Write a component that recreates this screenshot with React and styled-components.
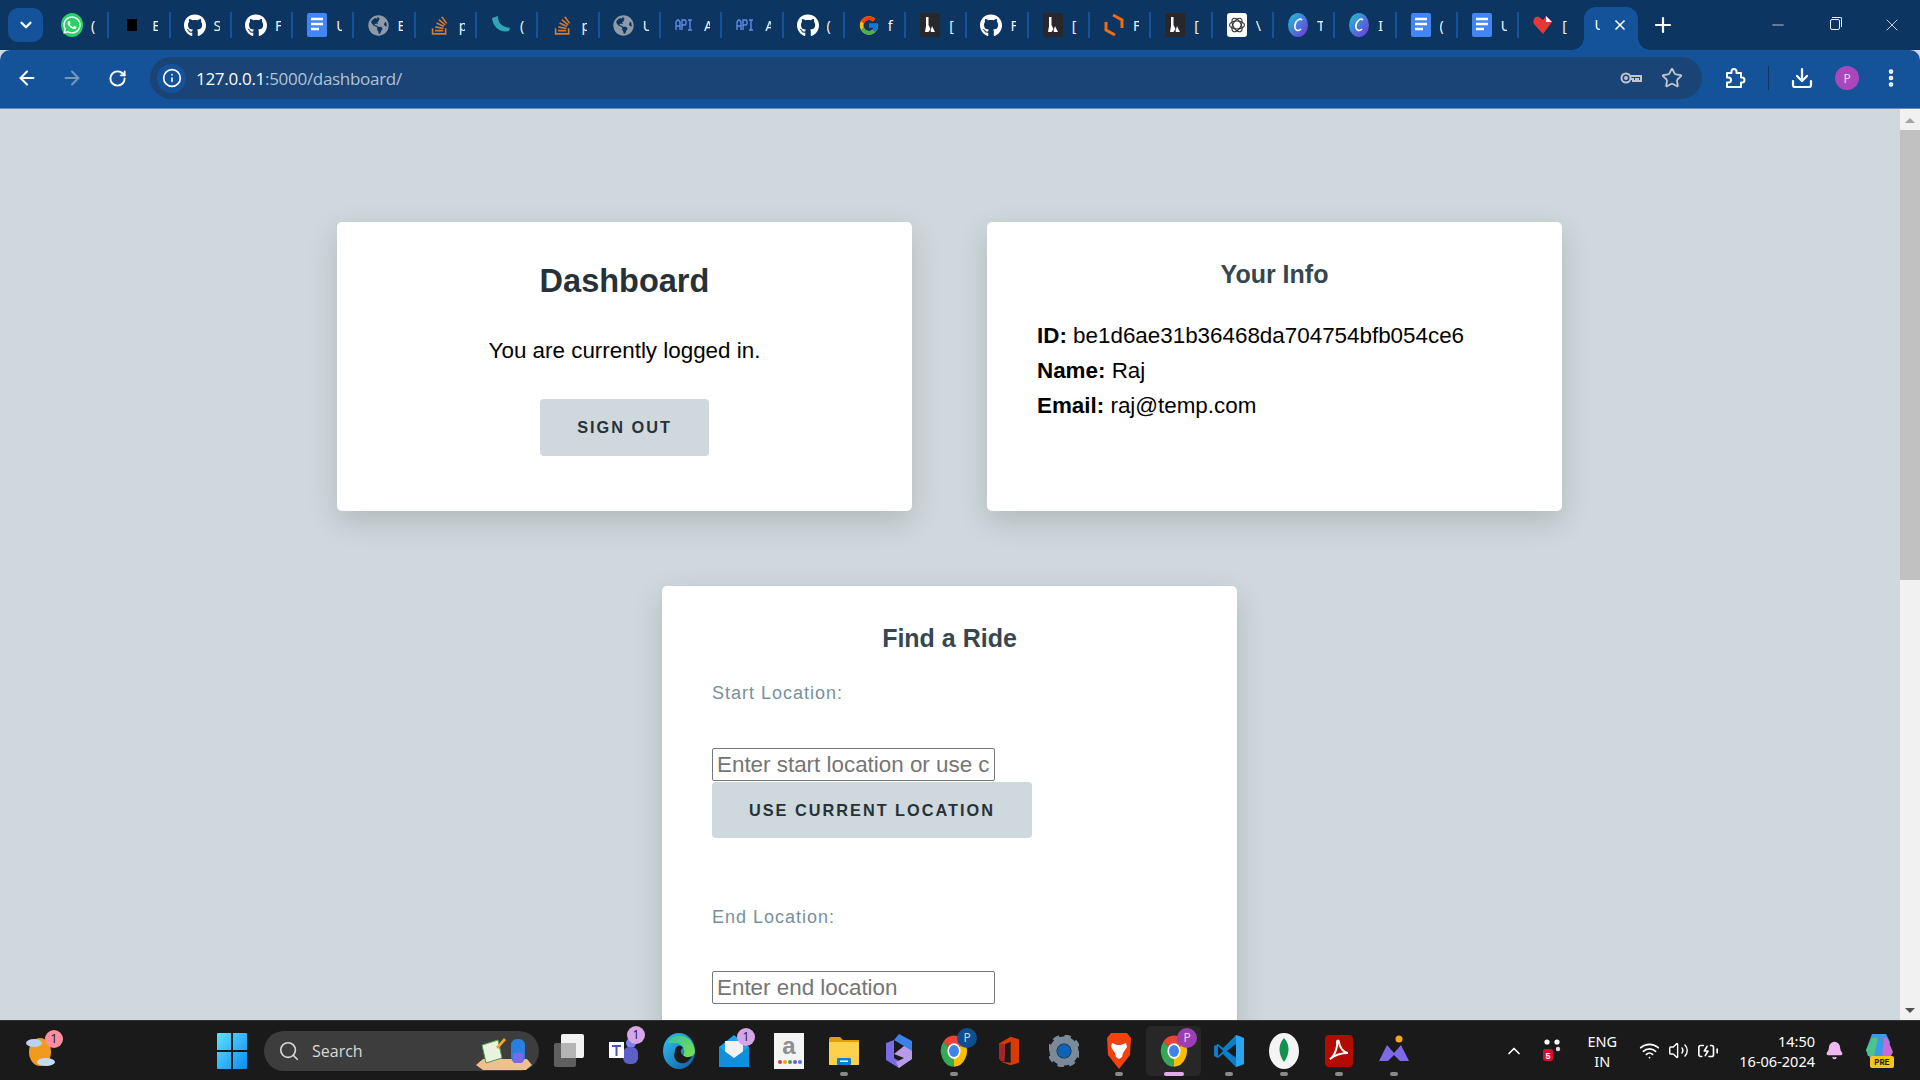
import React from "react";
import styled, { createGlobalStyle } from "styled-components";
import {
  ArrowLeft, ArrowRight, RotateCw, Info, X, Plus, Minus, Star, Download,
  EllipsisVertical, ChevronDown, ChevronUp, Search, Wifi, Volume2, BatteryCharging, Bell,
} from "lucide-react";
import { FaWhatsapp, FaGithub, FaStackOverflow, FaGlobeAmericas } from "react-icons/fa";
import { FcGoogle } from "react-icons/fc";

const GlobalStyle = createGlobalStyle`
  html, body {
    margin: 0;
    padding: 0;
    overflow: hidden;
    background: #cfd8dc;
  }
  * { box-sizing: border-box; }
`;

const Screen = styled.div`
  width: 1920px;
  height: 1080px;
  display: flex;
  flex-direction: column;
  overflow: hidden;
  font-family: "Liberation Sans", Arial, sans-serif;
`;

/* browser chrome */
const TabStrip = styled.div`
  height: 50px;
  flex: none;
  display: flex;
  align-items: flex-start;
  background: #0d3561;
  padding-left: 8px;
`;

const TabMenu = styled.button`
  width: 35px;
  height: 34px;
  margin: 8px 5px 0 0;
  flex: none;
  border: 0;
  border-radius: 10px;
  background: #14539a;
  color: #fff;
  display: flex;
  align-items: center;
  justify-content: center;
  padding: 0;
`;

const Tab = styled.div`
  width: 61.3px;
  height: 26px;
  margin-top: 12px;
  flex: none;
  display: flex;
  align-items: center;
  gap: 8px;
  padding: 0 0 0 13px;
  border-right: ${(p) => (p.$last ? "0" : "2px solid #14539a")};
  color: #f2f5f9;
  font: 14px "Noto Sans", sans-serif;
  overflow: hidden;
`;

const TabIcon = styled.div`
  width: 22px;
  height: 26px;
  flex: none;
  display: flex;
  align-items: center;
  justify-content: center;
`;

const WhatsappMark = styled.div`
  width: 22px;
  height: 24px;
  border-radius: 50%;
  background: #25d366;
  display: flex;
  align-items: center;
  justify-content: center;
  color: #fff;
`;

const TabTitle = styled.span`
  width: 6px;
  flex: none;
  overflow: hidden;
  white-space: nowrap;
`;

const ActiveTab = styled.div`
  width: 54px;
  height: 43px;
  margin: 7px 0 0 4px;
  flex: none;
  display: flex;
  align-items: center;
  justify-content: space-between;
  padding: 0 10px 8px 10px;
  background: #14539a;
  border-radius: 12px 12px 0 0;
  color: #fff;
  font: 14px "Noto Sans", sans-serif;
  position: relative;
  &::before, &::after {
    content: "";
    position: absolute;
    bottom: 0;
    width: 12px;
    height: 12px;
    background: radial-gradient(circle at 0 0, #0d3561 11.5px, #14539a 12px);
  }
  &::before { left: -12px; }
  &::after { right: -12px; background: radial-gradient(circle at 100% 0, #0d3561 11.5px, #14539a 12px); }
`;

const NewTab = styled.div`
  width: 24px;
  height: 24px;
  margin: 13px 0 0 13px;
  flex: none;
  color: #fff;
`;

const WindowControls = styled.div`
  margin-left: auto;
  display: flex;
  height: 50px;
  color: #e8eef5;
`;

const WindowButton = styled.div`
  width: 57px;
  display: flex;
  align-items: center;
  justify-content: center;
  padding-bottom: 1px;
`;

const RestoreIcon = styled.div`
  width: 10px;
  height: 11px;
  border: 1px solid #e8eef5;
  border-radius: 2px;
  position: relative;
  &::after {
    content: "";
    position: absolute;
    top: -3px;
    right: -3px;
    width: 9px;
    height: 9px;
    border-top: 1px solid #e8eef5;
    border-right: 1px solid #e8eef5;
    border-radius: 0 2px 0 0;
  }
`;

const Toolbar = styled.div`
  height: 59px;
  flex: none;
  display: flex;
  align-items: center;
  padding: 0 0 2px 9px;
  background: #14539a;
  border-bottom: 1px solid #5f8fc0;
  border-radius: 10px 10px 0 0;
`;

const NavButton = styled.div`
  width: 36px;
  height: 36px;
  margin-right: 9px;
  flex: none;
  display: flex;
  align-items: center;
  justify-content: center;
  color: ${(p) => (p.$dim ? "#7596bd" : "#fff")};
`;

const Omnibox = styled.div`
  width: 1552px;
  height: 42px;
  margin-left: 6px;
  flex: none;
  display: flex;
  align-items: center;
  padding: 0 19px 0 7px;
  border-radius: 21px;
  background: #194475;
`;

const SiteInfo = styled.div`
  width: 29px;
  height: 29px;
  flex: none;
  border-radius: 50%;
  background: #14539a;
  color: #fff;
  display: flex;
  align-items: center;
  justify-content: center;
`;

const Url = styled.div`
  margin-left: 10px;
  font: 17px "Open Sans", sans-serif;
  letter-spacing: -0.3px;
  color: #fff;
  span { color: #b2c2d6; }
`;

const OmniIcons = styled.div`
  margin-left: auto;
  display: flex;
  align-items: center;
  gap: 18px;
  color: #c2c6cc;
`;

const ToolIcons = styled.div`
  display: flex;
  align-items: center;
  margin-left: 21px;
  color: #fff;
`;

const ToolIcon = styled.div`
  width: ${(p) => p.$w || 24}px;
  height: 24px;
  margin-right: ${(p) => p.$gap || 0}px;
  display: flex;
  align-items: center;
  justify-content: center;
`;

const ToolDivider = styled.div`
  width: 1px;
  height: 24px;
  margin-right: 21px;
  background: #0d3561;
`;

const Avatar = styled.div`
  width: 24px;
  height: 24px;
  margin-right: 20px;
  border-radius: 50%;
  background: #ab47bc;
  color: #f3dff7;
  font: 12px "Open Sans", sans-serif;
  display: flex;
  align-items: center;
  justify-content: center;
`;

/* page content */
const Viewport = styled.div`
  flex: 1;
  min-height: 0;
  display: flex;
  background: #cfd8dc;
  overflow: hidden;
`;

const Page = styled.main`
  flex: 1;
  min-width: 0;
  padding: 113px 1px 0 0;
  display: flex;
  flex-direction: column;
  align-items: center;
  gap: 75px;
`;

const Row = styled.div`
  display: flex;
  gap: 75px;
`;

const Card = styled.section`
  width: 575px;
  height: ${(p) => p.$h || 289}px;
  flex: none;
  padding: 40px 50px;
  background: #fff;
  border-radius: 5px;
  box-shadow: 0 10px 30px rgba(0, 0, 0, 0.15);
`;

const CenterCard = styled(Card)`
  display: flex;
  flex-direction: column;
  align-items: center;
`;

const Title = styled.h1`
  margin: 1px 0 0;
  font-size: 32.5px;
  line-height: 37px;
  font-weight: 700;
  color: #263238;
`;

const Lead = styled.p`
  margin: 37px 0 0;
  font-size: 22.4px;
  line-height: 28px;
  color: #000;
`;

const SubTitle = styled.h2`
  margin: ${(p) => p.$top || 0}px 0 0;
  font-size: 25px;
  line-height: 29px;
  font-weight: 700;
  text-align: center;
  color: #37474f;
`;

const InfoList = styled.div`
  margin-top: 29px;
  font-size: 22.4px;
  line-height: 35.2px;
  color: #000;
  b { font-weight: 700; }
`;

const Action = styled.button`
  display: block;
  height: ${(p) => p.$h || 57}px;
  margin-top: ${(p) => p.$top || 0}px;
  padding: 0 37px;
  border: 0;
  border-radius: 4px;
  background: #cfd8dc;
  color: #263238;
  font: 700 16.3px "Liberation Sans", Arial, sans-serif;
  letter-spacing: 2px;
  white-space: nowrap;
`;

const Label = styled.label`
  display: block;
  margin-top: ${(p) => p.$top}px;
  font-size: 18px;
  line-height: 21px;
  letter-spacing: 1px;
  color: #78909c;
`;

const Field = styled.input`
  display: block;
  width: 283px;
  height: 33px;
  margin: ${(p) => p.$top || 44}px 0 0;
  padding: 0 4px;
  border: 1px solid #767676;
  border-radius: 2px;
  background: #fff;
  font: 22.4px "Liberation Sans", Arial, sans-serif;
  color: #000;
  outline: none;
  &::placeholder { color: #757575; opacity: 1; }
`;

const Scrollbar = styled.div`
  width: 20px;
  flex: none;
  display: flex;
  flex-direction: column;
  align-items: center;
  background: #f1f1f1;
`;

const ScrollArrow = styled.div`
  width: 0;
  height: 0;
  flex: none;
  margin: 9px 0 ${(p) => (p.$down ? 7 : 0)}px;
  border-left: 5px solid transparent;
  border-right: 5px solid transparent;
  border-bottom: ${(p) => (p.$down ? "0" : "5px solid #a3a3a3")};
  border-top: ${(p) => (p.$down ? "5px solid #505050" : "0")};
`;

const ScrollThumb = styled.div`
  width: 100%;
  height: 450px;
  margin-top: 7px;
  background: #c1c1c1;
`;

const ScrollSpacer = styled.div`
  flex: 1;
`;

/* taskbar */
const Taskbar = styled.footer`
  height: 60px;
  flex: none;
  display: flex;
  align-items: center;
  background: #1a1a1a;
  border-top: 1px solid #333;
  color: #fff;
  position: relative;
`;

const Weather = styled.div`
  width: 32px;
  height: 36px;
  margin-left: 25px;
  flex: none;
  position: relative;
`;

const Dock = styled.div`
  display: flex;
  align-items: center;
  margin-left: ${(p) => p.$left || 0}px;
`;

const DockItem = styled.div`
  width: 55px;
  height: 50px;
  flex: none;
  display: flex;
  align-items: center;
  justify-content: center;
  position: relative;
  border-radius: 5px;
  background: ${(p) => (p.$active ? "#272727" : "transparent")};
  &::after {
    content: "";
    display: ${(p) => (p.$run || p.$active ? "block" : "none")};
    position: absolute;
    bottom: 0;
    left: 50%;
    width: ${(p) => (p.$active ? 20 : 8)}px;
    height: 4px;
    transform: translateX(-50%);
    border-radius: 2px;
    background: ${(p) => (p.$active ? "#e3abe9" : "#8a8a8a")};
  }
`;

const SearchBox = styled.div`
  width: 275px;
  height: 40px;
  margin-left: 5px;
  flex: none;
  display: flex;
  align-items: center;
  gap: 12px;
  padding-left: 14px;
  border-radius: 20px;
  background: #3d3d3d;
  color: #d8d8d8;
  font: 16px "Open Sans", sans-serif;
  position: relative;
`;

const SearchArt = styled.div`
  position: absolute;
  right: 6px;
  bottom: 0;
  width: 58px;
  height: 40px;
`;

const Badge = styled.div`
  position: absolute;
  top: ${(p) => p.$top ?? 0}px;
  right: ${(p) => p.$right ?? 4}px;
  width: ${(p) => p.$size || 18}px;
  height: ${(p) => p.$size || 18}px;
  border-radius: 50%;
  background: ${(p) => p.$bg || "#d8a6e8"};
  color: ${(p) => p.$fg || "#1a1a1a"};
  font: 12px "Open Sans", sans-serif;
  display: flex;
  align-items: center;
  justify-content: center;
`;

const Tray = styled.div`
  position: absolute;
  right: 0;
  top: 0;
  bottom: 0;
  display: flex;
  align-items: center;
  font-family: "Noto Sans", sans-serif;
`;

const TrayIcon = styled.div`
  width: ${(p) => p.$w || 20}px;
  margin-right: ${(p) => p.$gap || 0}px;
  flex: none;
  display: flex;
  align-items: center;
  justify-content: center;
`;

const Lang = styled.div`
  width: 50px;
  margin-right: 11px;
  text-align: center;
  font-size: 14.5px;
  line-height: 20px;
`;

const Clock = styled.div`
  text-align: right;
  font-size: 14.5px;
  line-height: 20px;
  margin-right: 9px;
`;

/* drawn icons */
const DocsIcon = () => (
  <svg width="20" height="24" viewBox="0 0 20 24">
    <rect width="20" height="24" rx="2" fill="#4285f4" />
    <path d="M4 6h12M4 11h12M4 16h8" stroke="#fff" strokeWidth="2.4" />
  </svg>
);

const BlackIcon = () => (
  <svg width="20" height="20" viewBox="0 0 20 20">
    <rect x="4" y="4" width="10" height="12" fill="#000" />
  </svg>
);

const HornIcon = () => (
  <svg width="20" height="20" viewBox="0 0 20 20">
    <path d="M1 3 7 1c0 6 2 10 12 12l-1 3C9 18 2 12 1 3z" fill="#2fa6b8" />
  </svg>
);

const ApiIcon = () => (
  <svg width="20" height="20" viewBox="0 0 20 20" fill="none" stroke="#5f8ae8" strokeWidth="1.4">
    <path d="M1 15V7l1.5-2h1L5 7v8M1 11h4M7 15V5h3l1 1v3l-1 1H7M13 5h4M15 5v10M13 15h4" />
  </svg>
);

const LIcon = () => (
  <svg width="20" height="24" viewBox="0 0 20 24">
    <rect width="20" height="24" fill="#28282c" />
    <path d="M6 4h2.5v8l2 4L8.5 19H5l1-6zM12 13l3 6h-4l-.5-1z" fill="#fff" />
  </svg>
);

const HexIcon = () => (
  <svg width="20" height="24" viewBox="0 0 20 24" fill="none" stroke="#f26b11" strokeWidth="3">
    <path d="M9 2 18 7v8M11 22 2 17V9" />
  </svg>
);

const OpenAiIcon = () => (
  <svg width="20" height="24" viewBox="0 0 20 24">
    <rect width="20" height="24" rx="3" fill="#fff" />
    <g fill="none" stroke="#333" strokeWidth="1.1">
      <ellipse cx="10" cy="12" rx="7.5" ry="4" />
      <ellipse cx="10" cy="12" rx="7.5" ry="4" transform="rotate(60 10 12)" />
      <ellipse cx="10" cy="12" rx="7.5" ry="4" transform="rotate(120 10 12)" />
    </g>
  </svg>
);

const CanvaIcon = () => (
  <svg width="20" height="24" viewBox="0 0 20 24">
    <defs>
      <linearGradient id="canva" x1="0" y1="0" x2="1" y2="1">
        <stop offset="0" stopColor="#16c6cf" />
        <stop offset="1" stopColor="#7a2fe0" />
      </linearGradient>
    </defs>
    <ellipse cx="10" cy="12" rx="10" ry="12" fill="url(#canva)" />
    <path d="M14 7c-2-2-6 0-7 5s3 7 6 4" fill="none" stroke="#fff" strokeWidth="1.6" />
  </svg>
);

const HeartIcon = () => (
  <svg width="20" height="20" viewBox="0 0 20 20">
    <path d="M10 19 1 9C-1 5 2 1 6 2l4 3 3-4 6 6z" fill="#e53935" />
    <path d="M13 1l6 6h-6z" fill="#fff" />
  </svg>
);

const KeyIcon = () => (
  <svg width="24" height="24" viewBox="0 0 24 24" fill="none" stroke="currentColor" strokeWidth="2">
    <circle cx="7" cy="12" r="4.5" />
    <circle cx="7" cy="12" r="1" />
    <path d="M11.5 10H22v5h-3v-2h-2v2h-3v-2h-2.5" />
  </svg>
);

const ExtensionIcon = () => (
  <svg width="24" height="24" viewBox="0 0 24 24" fill="none" stroke="currentColor" strokeWidth="2" strokeLinejoin="round">
    <path d="M4 7h4.5V5.5a2.5 2.5 0 0 1 5 0V7H18v4.5h1a2.5 2.5 0 0 1 0 5h-1V21H4v-4.5h1.5a2.5 2.5 0 0 0 0-5H4z" />
  </svg>
);

const ChromeIcon = ({ size = 30 }) => (
  <svg width={size} height={size + 6} viewBox="0 0 48 48" preserveAspectRatio="none">
    <path d="M24 24 6.7 12A21 21 0 0 1 41.5 13z" fill="#ea4335" />
    <path d="M24 24 6.7 12A21 21 0 0 0 24 45z" fill="#34a853" />
    <path d="M24 24 41.5 13A21 21 0 0 1 24 45z" fill="#fbbc04" />
    <circle cx="24" cy="24" r="10.5" fill="#fff" />
    <circle cx="24" cy="24" r="8" fill="#3f83ea" />
  </svg>
);

const StartIcon = () => (
  <svg width="30" height="36" viewBox="0 0 30 36">
    <defs>
      <linearGradient id="win" x1="0" y1="0" x2="1" y2="1">
        <stop offset="0" stopColor="#5fe0fb" />
        <stop offset="1" stopColor="#0a8cf2" />
      </linearGradient>
    </defs>
    <path d="M0 1a1 1 0 0 1 1-1h13v17H0zM16 0h13a1 1 0 0 1 1 1v16H16zM0 19h14v17H1a1 1 0 0 1-1-1zM16 19h14v16a1 1 0 0 1-1 1H16z" fill="url(#win)" />
  </svg>
);

const WeatherIcon = () => (
  <svg width="32" height="36" viewBox="0 0 32 36">
    <ellipse cx="15" cy="19" rx="11" ry="14" fill="#f09a20" />
    <ellipse cx="9" cy="10" rx="8" ry="4" fill="#b9d3f2" />
    <ellipse cx="21" cy="29" rx="9" ry="4" fill="#c5dbf5" />
  </svg>
);

const TaskViewIcon = () => (
  <svg width="30" height="34" viewBox="0 0 30 34">
    <rect x="0" y="9" width="22" height="24" rx="2" fill="#5f5f5f" />
    <rect x="7" y="0" width="23" height="24" rx="2" fill="#f2f2f2" />
    <rect x="7" y="9" width="15" height="15" fill="#b5b5b5" />
  </svg>
);

const TeamsIcon = () => (
  <svg width="30" height="30" viewBox="0 0 30 30">
    <circle cx="22" cy="7" r="5" fill="#7b83eb" />
    <rect x="14" y="11" width="15" height="17" rx="6" fill="#5b5fc7" />
    <rect x="0" y="6" width="15" height="16" fill="#fff" />
    <path d="M3 9h9v2H8.5v9h-2v-9H3z" fill="#4b53bc" />
  </svg>
);

const EdgeIcon = () => (
  <svg width="32" height="36" viewBox="0 0 32 36">
    <defs>
      <linearGradient id="edge" x1="0" y1="0" x2="1" y2="1">
        <stop offset="0" stopColor="#35c1f1" />
        <stop offset="1" stopColor="#0c59a4" />
      </linearGradient>
      <linearGradient id="edge2" x1="0" y1="0" x2="1" y2="1">
        <stop offset="0" stopColor="#33c6a0" />
        <stop offset="1" stopColor="#7ee04a" />
      </linearGradient>
    </defs>
    <ellipse cx="16" cy="18" rx="16" ry="18" fill="url(#edge)" />
    <path d="M5 10C10 -2 30 0 32 18c0 6-8 8-12 5 4-6-2-14-8-13-3 0-5 0-7 0z" fill="url(#edge2)" />
    <path d="M12 18c0-5 6-7 8-3-3 1-3 6 1 8 3 2 6 1 8 0-4 8-12 10-17 3-1-2-1-5 0-8z" fill="#1a1a1a" />
  </svg>
);

const MailIcon = () => (
  <svg width="30" height="32" viewBox="0 0 30 32">
    <path d="M0 12 15 0l15 12v20H0z" fill="#1aa3e8" />
    <path d="M6 6h18v12l-9 6-9-6z" fill="#f2f2f2" />
    <path d="M0 12l15 11 15-11v20H0z" fill="#0f8fdc" />
  </svg>
);

const AmazonIcon = () => (
  <svg width="30" height="36" viewBox="0 0 30 36">
    <rect width="30" height="36" fill="#f4f4f4" />
    <circle cx="6" cy="29" r="2" fill="#e53935" />
    <circle cx="11" cy="29" r="2" fill="#f4a300" />
    <circle cx="16" cy="29" r="2" fill="#43a047" />
    <circle cx="21" cy="29" r="2" fill="#7b52d6" />
    <circle cx="26" cy="29" r="2" fill="#3f83ea" />
    <text x="15" y="21" textAnchor="middle" fontFamily="Liberation Sans" fontWeight="700" fontSize="24" fill="#8e8e8e">a</text>
  </svg>
);

const FolderIcon = () => (
  <svg width="30" height="28" viewBox="0 0 30 28">
    <path d="M0 2a2 2 0 0 1 2-2h9l3 3h16v25H0z" fill="#e09f0b" />
    <rect y="5" width="30" height="23" rx="1" fill="#fcd24c" />
    <rect x="8" y="21" width="14" height="7" rx="1" fill="#0a7fd6" />
    <rect x="11" y="23.5" width="8" height="1.4" fill="#fff" />
  </svg>
);

const CopilotAppIcon = () => (
  <svg width="26" height="34" viewBox="0 0 26 34">
    <path d="M13 0 26 7v18l-8 5V12L8 6z" fill="#3b82e8" />
    <path d="M0 9l8-3v18l10 6-5 4-13-8z" fill="#7a6be8" />
    <path d="M8 20l10-8 8 5v8l-13 9-3-6 8-4z" fill="#b79be8" />
  </svg>
);

const OfficeIcon = () => (
  <svg width="20" height="32" viewBox="0 0 24 34">
    <path d="M14 0l10 3v28l-10 3-12-4 12 1V6L7 9v13l-7 4V8z" fill="#d83b01" />
    <path d="M7 9v21l-5-1-2-3V8z" fill="#a4262c" />
  </svg>
);

const GearIcon = () => (
  <svg width="30" height="32" viewBox="0 0 30 32">
    <circle cx="15" cy="16" r="11" fill="none" stroke="#7b8a98" strokeWidth="7" />
    <circle cx="15" cy="16" r="14" fill="none" stroke="#7b8a98" strokeWidth="5" strokeDasharray="6 5" />
    <circle cx="15" cy="16" r="7" fill="#0f62b5" />
  </svg>
);

const BraveIcon = () => (
  <svg width="26" height="36" viewBox="0 0 26 36">
    <path d="M5 0h16l4 5-1 17-11 14L2 22 1 5z" fill="#f1420f" />
    <path d="M6 10l5 2h4l5-2 1 4-4 6-1 4-3 2-3-2-1-4-4-6z" fill="#fff" />
  </svg>
);

const VsCodeIcon = () => (
  <svg width="30" height="32" viewBox="0 0 30 32">
    <path d="M22 0 30 3v26l-8 3-13-13-5 4-4-2v-10l4-2 5 4z" fill="#0a7ecb" />
    <path d="M22 9 13 16l9 7z" fill="#1a1a1a" />
    <path d="M4 11l5 5-5 5z" fill="#1a1a1a" />
    <path d="M22 0 30 3v26l-8 3z" fill="#2aa5ee" />
  </svg>
);

const MongoIcon = () => (
  <svg width="30" height="36" viewBox="0 0 30 36">
    <ellipse cx="15" cy="18" rx="15" ry="18" fill="#f4f4f4" />
    <path d="M15 5c6 6 6 16 0 24-6-8-6-18 0-24z" fill="#12924f" />
  </svg>
);

const AcrobatIcon = () => (
  <svg width="28" height="32" viewBox="0 0 28 32">
    <rect width="28" height="32" rx="4" fill="#b30b00" />
    <path d="M5 24c4-2 8-12 7-17 0-2 2-2 2 0 0 5 5 11 9 11-4 0-12 1-18 6z" fill="none" stroke="#fff" strokeWidth="2" />
  </svg>
);

const ArcIcon = () => (
  <svg width="30" height="32" viewBox="0 0 30 32">
    <circle cx="20" cy="4" r="3.5" fill="#f5a623" />
    <path d="M0 26 8 10l7 8 7-8 8 16H21l-6-6-6 6z" fill="#7c6ae6" />
  </svg>
);

const CloudTrayIcon = () => (
  <svg width="20" height="24" viewBox="0 0 20 24">
    <rect x="0" y="10" width="10" height="12" rx="2" fill="#d90b2d" />
    <circle cx="4" cy="3" r="2.6" fill="#fff" />
    <circle cx="14" cy="3" r="2.6" fill="#fff" />
    <circle cx="15" cy="10" r="2.2" fill="#ddd" />
    <text x="5" y="20" textAnchor="middle" fontSize="9" fontWeight="700" fill="#fff" fontFamily="Liberation Sans">5</text>
  </svg>
);

const CopilotTrayIcon = () => (
  <svg width="30" height="34" viewBox="0 0 30 34">
    <path d="M7 0h14l4 8-4 16H5L1 16z" fill="#3a9ae8" />
    <path d="M1 16 7 4h6l-4 18H3z" fill="#4ac48a" />
    <path d="M19 4h3l6 14-3 6h-8z" fill="#c86ad8" />
    <rect x="5" y="22" width="24" height="12" rx="2" fill="#f5c518" />
    <text x="17" y="31" textAnchor="middle" fontSize="8.5" fontWeight="700" fill="#222" fontFamily="Liberation Mono">PRE</text>
  </svg>
);

const SearchArtIcon = () => (
  <svg width="58" height="40" viewBox="0 0 58 40">
    <path d="M1 34l7-6h44l5 6-6 5H8z" fill="#ecc18f" />
    <path d="M7 14l16-5 4 18-16 5z" fill="#e9f2df" stroke="#4c9a52" strokeWidth="1" />
    <path d="M21 16l8-9 2 2-8 9z" fill="#f5a623" />
    <rect x="36" y="8" width="14" height="24" rx="6" fill="#2c7ee0" />
    <rect x="38" y="22" width="10" height="10" rx="2" fill="#7b6ae6" />
  </svg>
);

const github = <FaGithub size={23} color="#fff" />;
const globe = <FaGlobeAmericas size={21} color="#8e9aa8" />;
const stack = <FaStackOverflow size={21} color="#d9772b" />;

const tabs = [
  [<WhatsappMark><FaWhatsapp size={20} /></WhatsappMark>, "("],
  [<BlackIcon />, "E"],
  [github, "S"],
  [github, "F"],
  [<DocsIcon />, "U"],
  [globe, "E"],
  [stack, "p"],
  [<HornIcon />, "("],
  [stack, "p"],
  [globe, "U"],
  [<ApiIcon />, "A"],
  [<ApiIcon />, "A"],
  [github, "("],
  [<FcGoogle size={23} />, "f"],
  [<LIcon />, "["],
  [github, "F"],
  [<LIcon />, "["],
  [<HexIcon />, "F"],
  [<LIcon />, "["],
  [<OpenAiIcon />, "\\"],
  [<CanvaIcon />, "T"],
  [<CanvaIcon />, "I"],
  [<DocsIcon />, "("],
  [<DocsIcon />, "U"],
  [<HeartIcon />, "["],
];

const App = () => {
  return (
    <Screen>
      <GlobalStyle />
      <TabStrip>
        <TabMenu>
          <ChevronDown size={18} strokeWidth={3} />
        </TabMenu>
        {tabs.map(([icon, title], i) => (
          <Tab key={i} $last={i === tabs.length - 1}>
            <TabIcon>{icon}</TabIcon>
            <TabTitle>{title}</TabTitle>
          </Tab>
        ))}
        <ActiveTab>
          <TabTitle>U</TabTitle>
          <X size={16} strokeWidth={2.5} />
        </ActiveTab>
        <NewTab>
          <Plus size={24} strokeWidth={2.2} />
        </NewTab>
        <WindowControls>
          <WindowButton><Minus size={18} strokeWidth={1} /></WindowButton>
          <WindowButton><RestoreIcon /></WindowButton>
          <WindowButton><X size={20} strokeWidth={1} /></WindowButton>
        </WindowControls>
      </TabStrip>

      <Toolbar>
        <NavButton><ArrowLeft size={22} strokeWidth={2.2} /></NavButton>
        <NavButton $dim><ArrowRight size={22} strokeWidth={2.2} /></NavButton>
        <NavButton><RotateCw size={19} strokeWidth={2.4} /></NavButton>
        <Omnibox>
          <SiteInfo><Info size={20} strokeWidth={2} /></SiteInfo>
          <Url>127.0.0.1<span>:5000/dashboard/</span></Url>
          <OmniIcons>
            <KeyIcon />
            <Star size={22} strokeWidth={2} />
          </OmniIcons>
        </Omnibox>
        <ToolIcons>
          <ToolIcon $gap={21}><ExtensionIcon /></ToolIcon>
          <ToolDivider />
          <ToolIcon $gap={21}><Download size={24} strokeWidth={2.2} /></ToolIcon>
          <Avatar>P</Avatar>
          <ToolIcon><EllipsisVertical size={22} strokeWidth={3} /></ToolIcon>
        </ToolIcons>
      </Toolbar>

      <Viewport>
        <Page>
          <Row>
            <CenterCard>
              <Title>Dashboard</Title>
              <Lead>You are currently logged in.</Lead>
              <Action $top={34}>SIGN OUT</Action>
            </CenterCard>
            <Card>
              <SubTitle $top={-2}>Your Info</SubTitle>
              <InfoList>
                <div><b>ID:</b> be1d6ae31b36468da704754bfb054ce6</div>
                <div><b>Name:</b> Raj</div>
                <div><b>Email:</b> raj@temp.com</div>
              </InfoList>
            </Card>
          </Row>
          <Card $h={640}>
            <SubTitle $top={-2}>Find a Ride</SubTitle>
            <Label $top={30}>Start Location:</Label>
            <Field placeholder="Enter start location or use current location" />
            <Action $h={56} $top={1}>USE CURRENT LOCATION</Action>
            <Label $top={69}>End Location:</Label>
            <Field $top={43} placeholder="Enter end location" />
          </Card>
        </Page>
        <Scrollbar>
          <ScrollArrow />
          <ScrollThumb />
          <ScrollSpacer />
          <ScrollArrow $down />
        </Scrollbar>
      </Viewport>

      <Taskbar>
        <Weather>
          <WeatherIcon />
          <Badge $bg="#ff8f9f" $top={-3} $right={-6}>1</Badge>
        </Weather>
        <Dock $left={147}>
          <DockItem><StartIcon /></DockItem>
        </Dock>
        <SearchBox>
          <Search size={22} strokeWidth={1.8} />
          Search
          <SearchArt><SearchArtIcon /></SearchArt>
        </SearchBox>
        <Dock $left={2}>
          <DockItem><TaskViewIcon /></DockItem>
          <DockItem><TeamsIcon /><Badge $top={0} $right={6}>1</Badge></DockItem>
          <DockItem><EdgeIcon /></DockItem>
          <DockItem><MailIcon /><Badge $top={2} $right={6}>1</Badge></DockItem>
          <DockItem><AmazonIcon /></DockItem>
          <DockItem $run><FolderIcon /></DockItem>
          <DockItem><CopilotAppIcon /></DockItem>
          <DockItem $run>
            <ChromeIcon />
            <Badge $bg="#0f4f91" $fg="#cfe0f2" $size={20} $top={2} $right={4}>P</Badge>
          </DockItem>
          <DockItem><OfficeIcon /></DockItem>
          <DockItem><GearIcon /></DockItem>
          <DockItem $run><BraveIcon /></DockItem>
          <DockItem $active>
            <ChromeIcon />
            <Badge $bg="#9c3fb5" $fg="#f0d8f5" $size={20} $top={2} $right={4}>P</Badge>
          </DockItem>
          <DockItem $run><VsCodeIcon /></DockItem>
          <DockItem $run><MongoIcon /></DockItem>
          <DockItem $run><AcrobatIcon /></DockItem>
          <DockItem $run><ArcIcon /></DockItem>
        </Dock>
        <Tray>
          <TrayIcon $gap={19}><ChevronUp size={22} strokeWidth={2} /></TrayIcon>
          <TrayIcon $gap={14}><CloudTrayIcon /></TrayIcon>
          <Lang>ENG<br />IN</Lang>
          <TrayIcon $w={22} $gap={7}><Wifi size={21} strokeWidth={2} /></TrayIcon>
          <TrayIcon $w={22} $gap={8}><Volume2 size={21} strokeWidth={1.6} /></TrayIcon>
          <TrayIcon $w={22} $gap={20}><BatteryCharging size={22} strokeWidth={1.8} /></TrayIcon>
          <Clock>14:50<br />16-06-2024</Clock>
          <TrayIcon $w={20} $gap={21}><Bell size={19} fill="#edb9f0" color="#edb9f0" /></TrayIcon>
          <TrayIcon $w={30} $gap={25}><CopilotTrayIcon /></TrayIcon>
        </Tray>
      </Taskbar>
    </Screen>
  );
};

export default App;
